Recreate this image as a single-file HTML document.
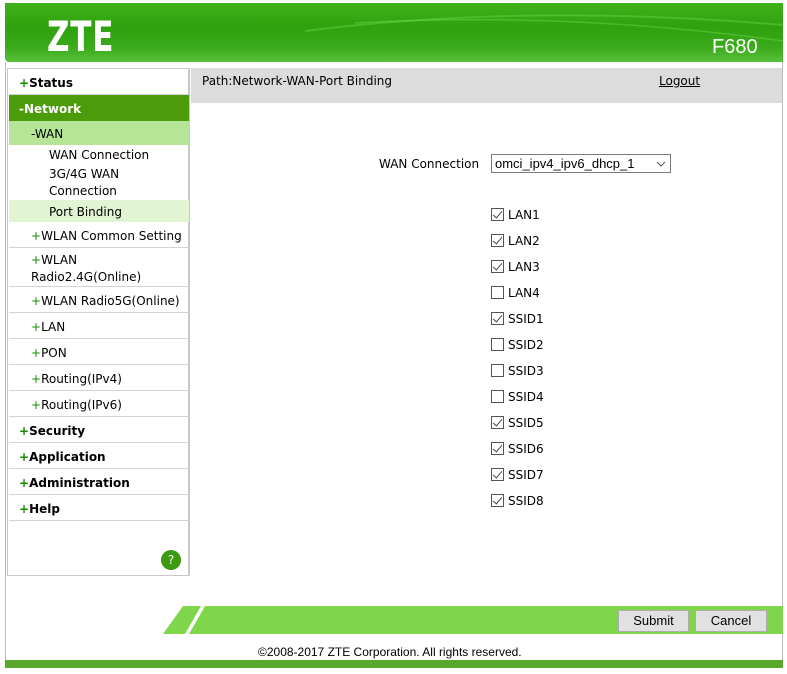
<!DOCTYPE html>
<html><head><style>
*{margin:0;padding:0;box-sizing:border-box}
body{width:787px;height:674px;background:#fff;font-family:"DejaVu Sans","Liberation Sans",sans-serif;font-size:12px;color:#000;position:relative;overflow:hidden}
.a{position:absolute}
.hdr{left:5px;top:3px;width:778px;height:59px;background:linear-gradient(180deg,#3fb21c 0%,#2ea10c 40%,#3aaa1c 75%,#59c038 100%);border-radius:0 0 0 4px;overflow:hidden}
.side{left:7px;top:68px;width:183px;height:508px;border:1px solid #c8c8c8;border-right:2px solid #c8c8c8}
.row{position:absolute;left:1px;width:180px;border-bottom:1px solid #d4d4d4;padding-left:10px;padding-top:1px}
.b{font-weight:bold}
.p{color:#1a8a00;font-weight:bold}
.cb{position:absolute;left:491px;width:13px;height:13px;border:1px solid #555;background:#fff}
.cb.c::after{content:"";position:absolute;left:3px;top:0px;width:4px;height:8px;border:solid #444;border-width:0 1.5px 1.5px 0;transform:rotate(40deg)}
.lb{position:absolute;left:508px}
.btn{position:absolute;top:610px;height:22px;background:#e1e1e1;border:1px solid #adadad;text-align:center;line-height:20px;font-size:13px;font-family:"Liberation Sans",sans-serif}
</style></head><body>
<div class="a hdr">
<svg width="778" height="59" class="a" style="left:0;top:0"><path d="M300 28 Q520 0 778 22" stroke="#7be05a" stroke-width="2" fill="none" opacity=".35"/><path d="M350 20 Q560 8 778 38" stroke="#8ef06a" stroke-width="1.5" fill="none" opacity=".3"/></svg>
<div class="a" style="left:42px;top:9px;color:#fff;font-family:'DejaVu Sans',sans-serif;font-weight:bold;font-size:42px;transform:scaleX(0.74);transform-origin:left top;letter-spacing:1px">ZTE</div>
<div class="a" style="left:707px;top:33px;color:#fff;font-family:'Liberation Sans',sans-serif;font-size:20px">F680</div>
</div>
<div class="a" style="left:5px;top:62px;width:1px;height:598px;background:#bbb"></div>
<div class="a" style="left:782px;top:62px;width:1px;height:598px;background:#bbb"></div>
<div class="a side">
<div class="row b" style="top:0;height:26px;line-height:27px"><span class="p">+</span>Status</div>
<div class="row b" style="top:26px;height:26px;line-height:26px;background:#4b9b0b;color:#fff;border:0">-Network</div>
<div class="row" style="top:52px;height:24px;line-height:24px;background:#b6e597;border:0;padding-left:22px">-WAN</div>
<div class="row" style="top:76px;height:19px;line-height:19px;border:0;padding-left:40px">WAN Connection</div>
<div class="row" style="top:95px;height:36px;line-height:17px;border:0;padding-left:40px;padding-top:2px">3G/4G WAN<br>Connection</div>
<div class="row" style="top:131px;height:22px;line-height:22px;background:#e1f5d3;border:0;padding-left:40px">Port Binding</div>
<div class="row" style="top:153px;height:26px;line-height:26px;padding-left:22px"><span style="color:#1a8a00">+</span>WLAN Common Setting</div>
<div class="row" style="top:179px;height:39px;line-height:17px;padding-left:22px;padding-top:4px"><span style="color:#1a8a00">+</span>WLAN<br>Radio2.4G(Online)</div>
<div class="row" style="top:218px;height:26px;line-height:26px;padding-left:22px"><span style="color:#1a8a00">+</span>WLAN Radio5G(Online)</div>
<div class="row" style="top:244px;height:26px;line-height:26px;padding-left:22px"><span style="color:#1a8a00">+</span>LAN</div>
<div class="row" style="top:270px;height:26px;line-height:26px;padding-left:22px"><span style="color:#1a8a00">+</span>PON</div>
<div class="row" style="top:296px;height:26px;line-height:26px;padding-left:22px"><span style="color:#1a8a00">+</span>Routing(IPv4)</div>
<div class="row" style="top:322px;height:26px;line-height:26px;padding-left:22px"><span style="color:#1a8a00">+</span>Routing(IPv6)</div>
<div class="row b" style="top:348px;height:26px;line-height:26px"><span class="p">+</span>Security</div>
<div class="row b" style="top:374px;height:26px;line-height:26px"><span class="p">+</span>Application</div>
<div class="row b" style="top:400px;height:26px;line-height:26px"><span class="p">+</span>Administration</div>
<div class="row b" style="top:426px;height:26px;line-height:26px"><span class="p">+</span>Help</div>
<div class="a" style="left:153px;top:481px;width:20px;height:20px;border-radius:50%;background:#3a9a10;color:#fff;text-align:center;line-height:20px;font-size:12px">?</div>
</div>
<div class="a" style="left:191px;top:68px;width:591px;height:35px;background:#dcdcdc"></div>
<div class="a" style="left:202px;top:74px">Path:Network-WAN-Port Binding</div>
<div class="a" style="left:659px;top:74px;text-decoration:underline">Logout</div>
<div class="a" style="left:379px;top:157px">WAN Connection</div>
<div class="a" style="left:491px;top:154px;width:180px;height:19px;border:1px solid #7a7a7a;line-height:17px;padding-left:3px;font-family:'Liberation Sans',sans-serif;font-size:13px">omci_ipv4_ipv6_dhcp_1<svg class="a" style="left:164px;top:6px" width="10" height="6"><path d="M1 1 L5 5 L9 1" stroke="#555" fill="none"/></svg></div>
<div class="cb c" style="top:208px"></div><div class="lb" style="top:208px">LAN1</div>
<div class="cb c" style="top:234px"></div><div class="lb" style="top:234px">LAN2</div>
<div class="cb c" style="top:260px"></div><div class="lb" style="top:260px">LAN3</div>
<div class="cb" style="top:286px"></div><div class="lb" style="top:286px">LAN4</div>
<div class="cb c" style="top:312px"></div><div class="lb" style="top:312px">SSID1</div>
<div class="cb" style="top:338px"></div><div class="lb" style="top:338px">SSID2</div>
<div class="cb" style="top:364px"></div><div class="lb" style="top:364px">SSID3</div>
<div class="cb" style="top:390px"></div><div class="lb" style="top:390px">SSID4</div>
<div class="cb c" style="top:416px"></div><div class="lb" style="top:416px">SSID5</div>
<div class="cb c" style="top:442px"></div><div class="lb" style="top:442px">SSID6</div>
<div class="cb c" style="top:468px"></div><div class="lb" style="top:468px">SSID7</div>
<div class="cb c" style="top:494px"></div><div class="lb" style="top:494px">SSID8</div>
<svg class="a" style="left:163px;top:606px" width="620" height="28"><polygon points="20,0 620,0 620,28 0,28" fill="#7fd64a"/><polygon points="38,0 42,0 26,28 22,28" fill="#fff"/></svg>
<div class="btn" style="left:618px;width:71px">Submit</div>
<div class="btn" style="left:695px;width:72px">Cancel</div>
<div class="a" style="left:258px;top:645px;font-family:'Liberation Sans',sans-serif;font-size:12px">©2008-2017 ZTE Corporation. All rights reserved.</div>
<div class="a" style="left:5px;top:660px;width:778px;height:8px;background:#5aa829"></div>
</body></html>
